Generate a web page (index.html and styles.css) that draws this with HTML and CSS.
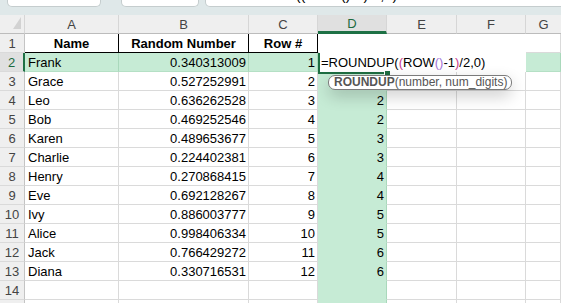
FILE: index.html
```html
<!DOCTYPE html>
<html lang="en">
<head>
    <meta charset="UTF-8">
    <title>Book1 - ROUNDUP</title>
    <link rel="stylesheet" href="styles.css">
</head>
<body>
    <!-- formula bar, mostly scrolled off the top -->
    <div class="formula-bar">
        <div class="box name-box"><div class="clip">D2</div></div>
        <div class="box cmd-box"><div class="clip"><span class="x">&#x2715;</span><span class="ok">&#x2713;</span><span class="fx">fx</span></div></div>
        <div class="box input-box"><div class="clip f">=ROUNDUP((ROW()-1)/2,0)</div></div>
    </div>

    <div class="sheet">
        <div class="hd corner"></div>
        <div class="hd">A</div>
        <div class="hd">B</div>
        <div class="hd">C</div>
        <div class="hd sel">D</div>
        <div class="hd">E</div>
        <div class="hd">F</div>
        <div class="hd last">G</div>

        <div class="rh">1</div>
        <div class="c th">Name</div>
        <div class="c th">Random Number</div>
        <div class="c th">Row #</div>
        <div class="c"></div><div class="c"></div><div class="c"></div><div class="c"></div>

        <div class="rh act">2</div>
        <div class="c g">Frank</div>
        <div class="c g n">0.340313009</div>
        <div class="c g n">1</div>
        <div class="c d"></div><div class="c"></div><div class="c"></div><div class="c g"></div>

        <div class="rh">3</div>
        <div class="c">Grace</div><div class="c n">0.527252991</div><div class="c n">2</div>
        <div class="c d n"></div><div class="c"></div><div class="c"></div><div class="c"></div>

        <div class="rh">4</div>
        <div class="c">Leo</div><div class="c n">0.636262528</div><div class="c n">3</div>
        <div class="c d n">2</div><div class="c"></div><div class="c"></div><div class="c"></div>

        <div class="rh">5</div>
        <div class="c">Bob</div><div class="c n">0.469252546</div><div class="c n">4</div>
        <div class="c d n">2</div><div class="c"></div><div class="c"></div><div class="c"></div>

        <div class="rh">6</div>
        <div class="c">Karen</div><div class="c n">0.489653677</div><div class="c n">5</div>
        <div class="c d n">3</div><div class="c"></div><div class="c"></div><div class="c"></div>

        <div class="rh">7</div>
        <div class="c">Charlie</div><div class="c n">0.224402381</div><div class="c n">6</div>
        <div class="c d n">3</div><div class="c"></div><div class="c"></div><div class="c"></div>

        <div class="rh">8</div>
        <div class="c">Henry</div><div class="c n">0.270868415</div><div class="c n">7</div>
        <div class="c d n">4</div><div class="c"></div><div class="c"></div><div class="c"></div>

        <div class="rh">9</div>
        <div class="c">Eve</div><div class="c n">0.692128267</div><div class="c n">8</div>
        <div class="c d n">4</div><div class="c"></div><div class="c"></div><div class="c"></div>

        <div class="rh">10</div>
        <div class="c">Ivy</div><div class="c n">0.886003777</div><div class="c n">9</div>
        <div class="c d n">5</div><div class="c"></div><div class="c"></div><div class="c"></div>

        <div class="rh">11</div>
        <div class="c">Alice</div><div class="c n">0.998406334</div><div class="c n">10</div>
        <div class="c d n">5</div><div class="c"></div><div class="c"></div><div class="c"></div>

        <div class="rh">12</div>
        <div class="c">Jack</div><div class="c n">0.766429272</div><div class="c n">11</div>
        <div class="c d n">6</div><div class="c"></div><div class="c"></div><div class="c"></div>

        <div class="rh">13</div>
        <div class="c">Diana</div><div class="c n">0.330716531</div><div class="c n">12</div>
        <div class="c d n">6</div><div class="c"></div><div class="c"></div><div class="c"></div>

        <div class="rh">14</div>
        <div class="c"></div><div class="c"></div><div class="c"></div>
        <div class="c d"></div><div class="c"></div><div class="c"></div><div class="c"></div>

        <div class="rh"></div>
        <div class="c"></div><div class="c"></div><div class="c"></div>
        <div class="c d"></div><div class="c"></div><div class="c"></div><div class="c"></div>

        <!-- in-cell editor for D2 -->
        <div class="editor">=ROUNDUP(<span class="p1">(</span>ROW<span class="p2">()</span>-1<span class="p1">)</span>/2,0)</div>
        <div class="active-cell"></div>
        <div class="handle"></div>
        <div class="tip"><b>ROUNDUP</b>(number, num_digits)</div>
    </div>
</body>
</html>
```

FILE: styles.css
```css
body {
    margin: 0;
    height: 303px;
    background: #fff;
    font-family: "Liberation Sans", Arial, sans-serif;
    font-size: 13px;
    color: #000;
    overflow: hidden;
}

/* formula bar */
.formula-bar {
    display: flex;
    align-items: flex-start;
    height: 15px;
    padding-left: 7px;
    background: #dfe8e9;
}
.box {
    height: 7px;
    background: #fff;
    border: 1px solid #c5cdce;
    border-top: none;
    border-radius: 0 0 5px 5px;
    overflow: hidden;
    box-sizing: border-box;
    white-space: nowrap;
}
.box .clip {
    margin-top: -13px;
    line-height: 16px;
}
.name-box {
    width: 94px;
    margin-right: 20px;
}
.name-box .clip {
    visibility: hidden;
}
.cmd-box {
    width: 78px;
    margin-right: 6px;
    padding-left: 5px;
}
.cmd-box .x {
    color: #d13438;
    font-size: 14px;
    margin-right: 10px;
}
.cmd-box .ok {
    color: #fff;
    margin-right: 14px;
}
.cmd-box .fx {
    color: #777;
    font-style: italic;
    font-size: 14px;
}
.input-box {
    flex: 1;
    margin-right: -10px;
    padding-left: 8px;
}
.input-box .f {
    font-size: 14.5px;
}

/* sheet grid */
.sheet {
    position: relative;
    display: grid;
    grid-template-columns: 25px 94px 130px 69px 69px 70px 69px 1fr;
    grid-auto-rows: 19px;
    height: 288px;
    overflow: hidden;
}
.hd {
    background: #efefef;
    color: #444;
    text-align: center;
    line-height: 19px;
    border-right: 1px solid #d6d6d6;
    border-bottom: 1px solid #bcbcbc;
    box-sizing: border-box;
}
.hd.sel {
    background: #e0e0e0;
    color: #1d6b40;
    border-bottom: 3px solid #1e7145;
    line-height: 17px;
}
.hd.last {
    border-right: none;
}
.corner {
    position: relative;
}
.corner::after {
    content: "";
    position: absolute;
    right: 3px;
    bottom: 4px;
    border-left: 8px solid transparent;
    border-bottom: 12px solid #d2d2d2;
}
.rh {
    background: #efefef;
    color: #444;
    text-align: center;
    line-height: 19px;
    border-right: 1px solid #c4c4c4;
    border-bottom: 1px solid #dadada;
    box-sizing: border-box;
}
.rh.act {
    background: #e0e0e0;
    color: #1d6b40;
    border-right: 2px solid #1e7145;
}
.c {
    border-right: 1px solid #dadada;
    border-bottom: 1px solid #dadada;
    box-sizing: border-box;
    padding: 2px 3px 0;
    line-height: 16px;
    white-space: nowrap;
    overflow: hidden;
}
.n {
    text-align: right;
    padding-right: 2px;
}
.th {
    font-weight: bold;
    text-align: center;
    border-right-color: #000;
    border-bottom-color: #000;
}
.g,
.d {
    background: #c6ebd5;
    border-right-color: #a9d8bb;
    border-bottom-color: #b5e0c5;
}
.d {
    border-bottom-color: #c6ebd5;
}

/* editing overlays */
.editor {
    position: absolute;
    left: 319px;
    top: 19px;
    width: 207px;
    height: 38px;
    box-sizing: border-box;
    padding: 21px 0 0 2px;
    line-height: 16px;
    background: #fff;
    white-space: nowrap;
}
.editor .p1 {
    color: #c8398e;
}
.editor .p2 {
    color: #a374d8;
}
.active-cell {
    position: absolute;
    left: 318px;
    top: 38px;
    width: 68px;
    height: 21px;
    box-sizing: border-box;
    border-left: 2px solid #1e6e42;
    border-bottom: 2px solid #1e6e42;
}
.handle {
    position: absolute;
    left: 384px;
    top: 55px;
    width: 5px;
    height: 5px;
    background: #1e6e42;
    border: 1px solid #fff;
}
.tip {
    position: absolute;
    left: 328px;
    top: 60px;
    height: 15px;
    box-sizing: border-box;
    padding: 0 4px 0 5px;
    border: 1.5px solid #7b7b7b;
    border-radius: 7px;
    background: #fff;
    color: #555;
    font-size: 12px;
    line-height: 12px;
    white-space: nowrap;
    box-shadow: 0 6px 16px rgba(0, 0, 0, 0.2);
}
.tip b {
    color: #555;
}
```
